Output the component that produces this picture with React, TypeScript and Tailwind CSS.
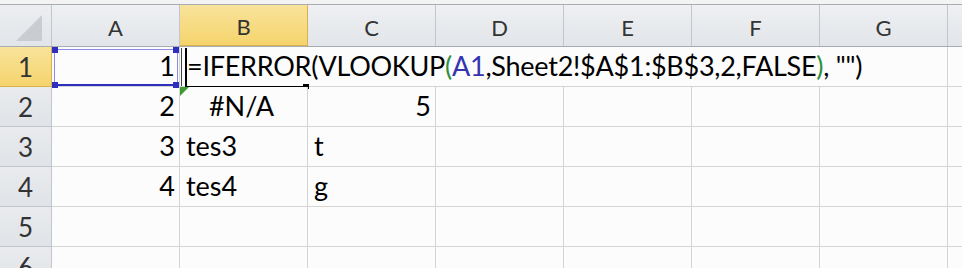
import React from "react";

const COLS = ["A", "B", "C", "D", "E", "F", "G"];
const font = { fontFamily: "Lato, 'Noto Sans', sans-serif" };

function HeaderCell({ label, active }: { label: string; active?: boolean }) {
  return (
    <div
      className={
        "w-[128px] shrink-0 h-full flex items-center justify-center text-[22px] text-[#333] border-r " +
        (active
          ? "bg-gradient-to-b from-[#f9e39a] to-[#f5d46c] border-[#d9b24e] border-b border-b-[#d9b24e]"
          : "bg-gradient-to-b from-[#eef0f3] to-[#e2e5e9] border-[#c3c7cd]")
      }
    >
      <span className="pt-[3px]">{label}</span>
    </div>
  );
}

function RowHead({ n, active }: { n: number; active?: boolean }) {
  return (
    <div
      className={
        "w-[52px] shrink-0 h-full flex items-end justify-center pb-[6px] text-[26px] leading-none text-[#333] border-r border-b " +
        (active
          ? "bg-gradient-to-b from-[#f9e39a] to-[#f5d46c] border-[#d9b24e]"
          : "bg-gradient-to-b from-[#e9ebee] to-[#e0e3e7] border-[#c3c7cd]")
      }
    >
      {n}
    </div>
  );
}

function Cell({
  children,
  align = "left",
  className = "",
}: {
  children?: React.ReactNode;
  align?: "left" | "right" | "center";
  className?: string;
}) {
  const a =
    align === "right" ? "justify-end pr-[4px]" : align === "center" ? "justify-center" : "justify-start pl-[6px]";
  return (
    <div
      className={
        "w-[128px] shrink-0 h-full flex items-end pb-[7px] text-[27px] leading-none text-black border-r border-b border-[#d4d4d4] bg-[#fcfcfc] " +
        a +
        " " +
        className
      }
    >
      {children}
    </div>
  );
}

function Row({ n, cells }: { n: number; cells: React.ReactNode[] }) {
  return (
    <div className="flex h-[40px]">
      <RowHead n={n} />
      {cells}
      <div className="flex-1 h-full border-b border-[#d4d4d4] bg-[#fcfcfc]" />
    </div>
  );
}

export default function App() {
  const empty = (k: string) => <Cell key={k} />;
  return (
    <div className="w-[962px] h-[268px] overflow-hidden bg-[#fcfcfc] select-none" style={font}>
      {/* top strip */}
      <div className="h-[5px] bg-[#f3f3f3] border-b border-[#a9acb0]" />
      {/* column header */}
      <div className="flex h-[42px] border-b border-[#a9adb2]">
        <div className="w-[52px] shrink-0 h-full bg-gradient-to-b from-[#eceef1] to-[#e2e5e9] border-r border-[#c3c7cd] relative">
          <svg className="absolute right-[9px] bottom-[5px]" width="26" height="26" viewBox="0 0 26 26">
            <path d="M26 0 L26 26 L0 26 Z" fill="#c9cdd2" />
          </svg>
        </div>
        {COLS.map((c) => (
          <HeaderCell key={c} label={c} active={c === "B"} />
        ))}
        <div className="flex-1 h-full bg-gradient-to-b from-[#eef0f3] to-[#e2e5e9]" />
      </div>

      {/* row 1 */}
      <div className="flex h-[40px]">
        <RowHead n={1} active />
        <div className="w-[128px] shrink-0 h-full relative flex items-end justify-end pr-[4px] pb-[7px] text-[27px] leading-none border-r border-b border-[#d4d4d4] bg-[#fcfcfc]">
          1
          {/* reference highlight */}
          <div className="absolute left-[2px] top-[2px] right-[1px] bottom-[0px] border border-[#8a8ae6] border-b-2 border-b-[#2f2fbf]" />
          <div className="absolute left-[0px] top-[0px] w-[6px] h-[6px] bg-[#2f2fbf]" />
          <div className="absolute right-[0px] top-[0px] w-[6px] h-[6px] bg-[#2f2fbf]" />
          <div className="absolute left-[0px] bottom-[-2px] w-[6px] h-[6px] bg-[#2f2fbf]" />
          <div className="absolute right-[0px] bottom-[-2px] w-[6px] h-[6px] bg-[#2f2fbf]" />
        </div>
        <div className="w-[768px] shrink-0 h-full relative flex items-end pl-[7px] pb-[7px] text-[27px] leading-none whitespace-nowrap border-r border-b border-[#d4d4d4] bg-[#fcfcfc]">
          <span className="tracking-[-0.25px]">
            =IFERROR(VLOOKUP<span className="text-[#2f8f3a]">(</span>
            <span className="text-[#3535b0]">A1</span>,Sheet2!$A$1:$B$3,2,FALSE<span className="text-[#2f8f3a]">)</span>, &quot;&quot;)
          </span>
          {/* cursor */}
          <div className="absolute left-[1px] top-[1px] bottom-[0px] w-[1px] bg-[#444]" />
          {/* active cell border */}
          <div className="absolute left-[5px] top-[1px] bottom-[-2px] w-[2px] bg-black" />
          <div className="absolute left-[5px] bottom-[-2px] w-[118px] h-[2px] bg-black" />
          <div className="absolute left-[123px] bottom-[-3px] w-[6px] h-[5px] bg-black" />
        </div>
        <div className="flex-1 h-full border-b border-[#d4d4d4] bg-[#fcfcfc]" />
      </div>

      <Row
        n={2}
        cells={[
          <Cell key="a" align="right">2</Cell>,
          <Cell key="b" align="center" className="relative">
            <svg className="absolute left-0 top-0" width="9" height="9" viewBox="0 0 9 9">
              <path d="M0 0 L9 0 L0 9 Z" fill="#3f9a2f" />
            </svg>
            <span className="pr-[4px]">#N/A</span>
          </Cell>,
          <Cell key="c" align="right">5</Cell>,
          empty("d"),
          empty("e"),
          empty("f"),
          empty("g"),
        ]}
      />
      <Row
        n={3}
        cells={[
          <Cell key="a" align="right">3</Cell>,
          <Cell key="b">tes3</Cell>,
          <Cell key="c">t</Cell>,
          empty("d"),
          empty("e"),
          empty("f"),
          empty("g"),
        ]}
      />
      <Row
        n={4}
        cells={[
          <Cell key="a" align="right">4</Cell>,
          <Cell key="b">tes4</Cell>,
          <Cell key="c">g</Cell>,
          empty("d"),
          empty("e"),
          empty("f"),
          empty("g"),
        ]}
      />
      <Row n={5} cells={COLS.map((c) => empty(c))} />
      <Row n={6} cells={COLS.map((c) => empty(c))} />
    </div>
  );
}
